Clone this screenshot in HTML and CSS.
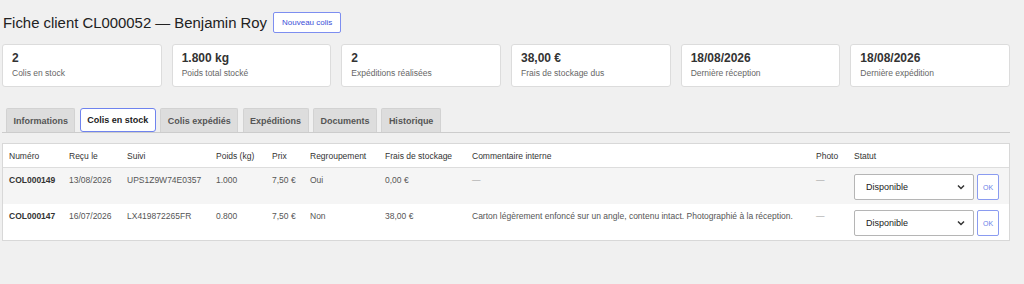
FILE: index.html
```html
<!DOCTYPE html>
<html lang="fr">
<head>
    <meta charset="UTF-8">
    <meta name="viewport" content="width=device-width, initial-scale=1.0">
    <title>Fiche client CL000052</title>
    <link rel="stylesheet" href="styles.css">
</head>
<body>

<!-- En-tête -->
<div class="page-head">
    <h1>Fiche client CL000052 — Benjamin Roy</h1>
    <button class="btn-outline">Nouveau colis</button>
</div>

<!-- Indicateurs -->
<div class="stats">
    <div class="stat"><div class="stat-value">2</div><div class="stat-label">Colis en stock</div></div>
    <div class="stat"><div class="stat-value">1.800 kg</div><div class="stat-label">Poids total stocké</div></div>
    <div class="stat"><div class="stat-value">2</div><div class="stat-label">Expéditions réalisées</div></div>
    <div class="stat"><div class="stat-value">38,00 €</div><div class="stat-label">Frais de stockage dus</div></div>
    <div class="stat"><div class="stat-value">18/08/2026</div><div class="stat-label">Dernière réception</div></div>
    <div class="stat"><div class="stat-value">18/08/2026</div><div class="stat-label">Dernière expédition</div></div>
</div>

<!-- Onglets -->
<div class="tabs">
    <button class="tab">Informations</button>
    <button class="tab active">Colis en stock</button>
    <button class="tab">Colis expédiés</button>
    <button class="tab">Expéditions</button>
    <button class="tab">Documents</button>
    <button class="tab">Historique</button>
</div>

<!-- Colis en stock -->
<div class="panel">
    <table class="parcels">
        <colgroup>
            <col style="width:60px"><col style="width:58px"><col style="width:89px"><col style="width:56px">
            <col style="width:38px"><col style="width:75px"><col style="width:87px"><col style="width:344px">
            <col style="width:38px"><col>
        </colgroup>
        <thead>
            <tr>
                <th>Numéro</th><th>Reçu le</th><th>Suivi</th><th>Poids (kg)</th><th>Prix</th>
                <th>Regroupement</th><th>Frais de stockage</th><th>Commentaire interne</th><th>Photo</th><th>Statut</th>
            </tr>
        </thead>
        <tbody>
            <tr class="alt">
                <td class="ref">COL000149</td><td>13/08/2026</td><td>UPS1Z9W74E0357</td><td>1.000</td><td>7,50 €</td>
                <td>Oui</td><td>0,00 €</td><td class="muted">—</td><td class="muted">—</td>
                <td>
                    <form class="status-form">
                        <span class="select-wrap">
                            <select class="status"><option>Disponible</option></select>
                            <svg class="chevron" width="8" height="6" viewBox="0 0 8 6"><path d="M1 1.5 L4 4.5 L7 1.5" fill="none" stroke="#333" stroke-width="1.5"/></svg>
                        </span>
                        <button class="btn-ok" type="submit">OK</button>
                    </form>
                </td>
            </tr>
            <tr>
                <td class="ref">COL000147</td><td>16/07/2026</td><td>LX419872265FR</td><td>0.800</td><td>7,50 €</td>
                <td>Non</td><td>38,00 €</td><td>Carton légèrement enfoncé sur un angle, contenu intact. Photographié à la réception.</td><td class="muted">—</td>
                <td>
                    <form class="status-form">
                        <span class="select-wrap">
                            <select class="status"><option>Disponible</option></select>
                            <svg class="chevron" width="8" height="6" viewBox="0 0 8 6"><path d="M1 1.5 L4 4.5 L7 1.5" fill="none" stroke="#333" stroke-width="1.5"/></svg>
                        </span>
                        <button class="btn-ok" type="submit">OK</button>
                    </form>
                </td>
            </tr>
        </tbody>
    </table>
</div>

</body>
</html>
```

FILE: styles.css
```css
body {
    font-family: "Liberation Sans", Arial, sans-serif;
    margin: 0;
    padding: 0 14px 0 2px;
    background-color: #f0f0f0;
    color: #333;
}
.page-head {
    display: flex;
    align-items: center;
    gap: 6px;
    padding-top: 12px;
    padding-left: 1px;
    height: 21px;
}
.page-head h1 {
    font-size: 14.9px;
    font-weight: normal;
    margin: 0;
    color: #222;
}
.btn-outline {
    font-family: inherit;
    font-size: 8px;
    color: #3b4fd8;
    background: #fff;
    border: 1px solid #7d8ef0;
    border-radius: 2px;
    height: 21px;
    padding: 0 8px;
}
.stats {
    display: grid;
    grid-template-columns: repeat(6, 1fr);
    gap: 10px;
    margin-top: 11px;
}
.stat {
    background: #fff;
    border: 1px solid #dcdcdc;
    border-radius: 3px;
    height: 35px;
    padding: 6px 9px 0;
}
.stat-value {
    font-size: 12px;
    font-weight: bold;
    line-height: 14px;
    color: #333;
}
.stat-label {
    font-size: 8.5px;
    line-height: 11px;
    margin-top: 3px;
    color: #666;
}
.tabs {
    display: flex;
    gap: 4.6px;
    margin-top: 21px;
    padding-left: 4px;
    border-bottom: 1px solid #ccc;
}
.tab {
    font-family: inherit;
    font-size: 9px;
    font-weight: bold;
    color: #555;
    background: #ddd;
    border: 1px solid #d2d2d2;
    border-bottom: none;
    border-radius: 2px 2px 0 0;
    height: 24px;
    padding: 0 6.4px;
}
.tab.active {
    background: #fff;
    color: #222;
    border: 1px solid #6f83ee;
    border-radius: 3px;
}
.panel {
    background: #fff;
    border: 1px solid #d8d8d8;
    margin-top: 10px;
}
.parcels {
    width: 100%;
    border-collapse: collapse;
    table-layout: fixed;
    font-size: 8.5px;
}
.parcels th {
    text-align: left;
    font-weight: normal;
    color: #333;
    padding: 7px 6px 6px;
    line-height: 10px;
    border-bottom: 1px solid #ddd;
}
.parcels td {
    vertical-align: top;
    padding: 7px 6px 4px;
    line-height: 10px;
    color: #555;
}
.parcels tr.alt td {
    background: #f5f5f5;
}
.parcels td.ref {
    font-weight: bold;
    color: #333;
}
.parcels td.muted {
    color: #999;
}
.status-form {
    display: flex;
    gap: 3px;
    margin-top: -1px;
}
.select-wrap {
    position: relative;
    display: inline-block;
}
.status {
    appearance: none;
    -webkit-appearance: none;
    font-family: inherit;
    font-size: 9px;
    color: #222;
    background: #fff;
    border: 1px solid #b5b5b5;
    border-radius: 2px;
    width: 120px;
    height: 26px;
    padding: 0 11px;
    margin: 0;
}
.chevron {
    position: absolute;
    right: 9px;
    top: 10px;
}
.btn-ok {
    font-family: inherit;
    font-size: 7px;
    color: #6a7fe8;
    background: #fff;
    border: 1px solid #8a9bf0;
    border-radius: 2px;
    width: 22px;
    height: 26px;
    padding: 0;
}
```
